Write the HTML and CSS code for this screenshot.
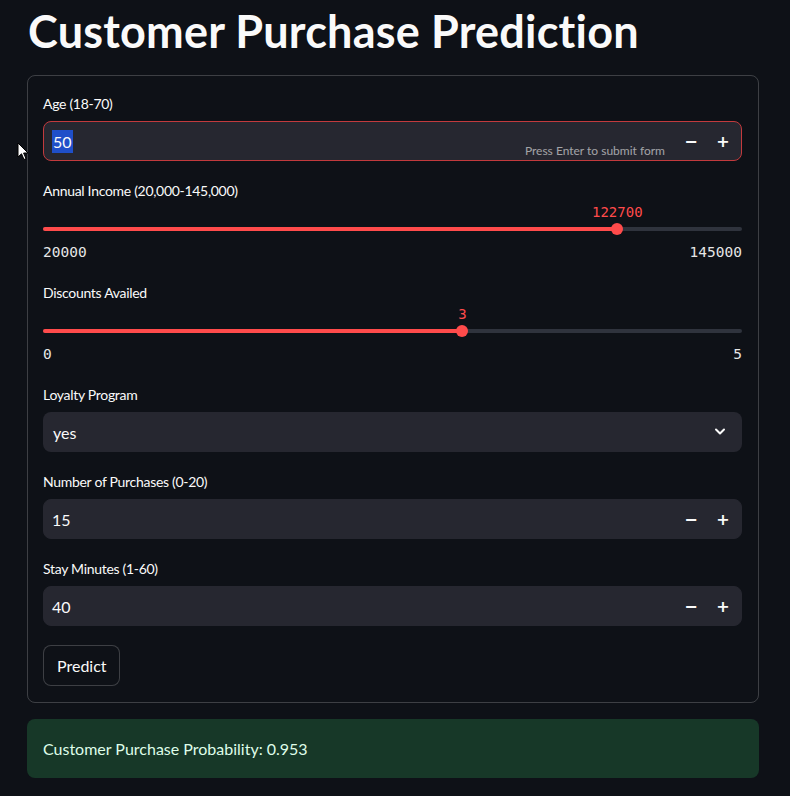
FILE: index.html
```html
<!DOCTYPE html>
<html>
<head>
<meta charset="utf-8">
<link rel="stylesheet" href="styles.css">
</head>
<body>
<div class="main">
  <h1 class="title">Customer Purchase Prediction</h1>
  <form class="form">
    <div class="widget num-widget">
      <div class="label">Age (18-70)</div>
      <div class="num-input focused">
        <span class="num-value"><span class="sel">50</span></span>
        <span class="hint">Press Enter to submit form</span>
        <span class="step">&#8722;</span>
        <span class="step">+</span>
      </div>
    </div>

    <div class="widget slider-widget">
      <div class="label">Annual Income (20,000-145,000)</div>
      <div class="slider-value-row">
        <span class="slider-value" style="left:82.16%">122700</span>
      </div>
      <div class="track-row">
        <div class="track">
          <div class="fill" style="width:82.16%"></div>
          <div class="thumb" style="left:82.16%"></div>
        </div>
      </div>
      <div class="ticks"><span>20000</span><span>145000</span></div>
    </div>

    <div class="widget slider-widget">
      <div class="label">Discounts Availed</div>
      <div class="slider-value-row">
        <span class="slider-value" style="left:60%">3</span>
      </div>
      <div class="track-row">
        <div class="track">
          <div class="fill" style="width:60%"></div>
          <div class="thumb" style="left:60%"></div>
        </div>
      </div>
      <div class="ticks"><span>0</span><span>5</span></div>
    </div>

    <div class="widget select-widget">
      <div class="label">Loyalty Program</div>
      <div class="select">
        <span>yes</span>
        <svg class="chev" width="12" height="8" viewBox="0 0 12 8"><path d="M2 1.5 L6 5.5 L10 1.5" fill="none" stroke="#fafafa" stroke-width="2" stroke-linecap="round" stroke-linejoin="round"/></svg>
      </div>
    </div>

    <div class="widget num-widget">
      <div class="label">Number of Purchases (0-20)</div>
      <div class="num-input">
        <span class="num-value">15</span>
        <span class="step">&#8722;</span>
        <span class="step">+</span>
      </div>
    </div>

    <div class="widget num-widget">
      <div class="label">Stay Minutes (1-60)</div>
      <div class="num-input">
        <span class="num-value">40</span>
        <span class="step">&#8722;</span>
        <span class="step">+</span>
      </div>
    </div>

    <div class="widget">
      <button type="button" class="btn">Predict</button>
    </div>
  </form>

  <div class="success">Customer Purchase Probability: 0.953</div>
</div>

<svg class="cursor" width="12" height="19" viewBox="0 0 12 19"><path d="M1 1 L1 15 L4.5 11.8 L7 17.5 L9 16.6 L6.6 11 L11 11 Z" fill="#ffffff" stroke="#000000" stroke-width="1" stroke-linejoin="round"/></svg>
</body>
</html>
```

FILE: styles.css
```css
* { box-sizing: border-box; }
html, body {
  margin: 0;
  padding: 0;
  background: #0e1117;
  color: #fafafa;
  font-family: "Lato", "Noto Sans", sans-serif;
}
.main {
  padding: 0 31px 0 27px;
}
.title {
  margin: 0;
  padding: 2px 0 0 1px;
  font-size: 45px;
  font-weight: 700;
  letter-spacing: 0.2px;
  line-height: 58px;
  height: 75px;
  color: #fafafa;
}
.form {
  border: 1px solid rgba(250,250,250,0.2);
  border-radius: 8px;
  padding: 17px 16px 16px 15px;
  display: flex;
  flex-direction: column;
  gap: 18px;
}
.label {
  font-size: 14px;
  letter-spacing: -0.3px;
  line-height: 21px;
  height: 21px;
  color: #fafafa;
}
.num-widget .label, .select-widget .label { margin-bottom: 7px; }
.num-widget, .select-widget { padding-bottom: 1px; }
.num-input {
  position: relative;
  height: 40px;
  background: #262730;
  border: 1px solid #262730;
  border-radius: 8px;
  display: flex;
  align-items: center;
  padding: 0 2px 0 8px;
}
.num-input.focused {
  border-color: #c23a3d;
}
.num-value {
  flex: 1;
  font-size: 16px;
  color: #fafafa;
}
.sel {
  background: #1f4fc9;
  padding: 2px 1px;
}
.hint {
  position: absolute;
  right: 76px;
  bottom: 2px;
  font-size: 12px;
  color: rgba(250,250,250,0.6);
}
.step {
  width: 32px;
  text-align: center;
  font-size: 16px;
  font-weight: 700;
  color: #fafafa;
  font-family: "DejaVu Sans", sans-serif;
}
.slider-widget { padding-bottom: 3px; }
.slider-value-row {
  position: relative;
  height: 18px;
  margin-top: 2px;
}
.slider-value {
  position: absolute;
  top: 0;
  transform: translateX(-50%);
  font-family: "DejaVu Sans Mono", monospace;
  font-size: 14px;
  line-height: 18px;
  color: #ff4b4b;
}
.track-row {
  height: 16px;
  display: flex;
  align-items: center;
}
.track {
  position: relative;
  width: 100%;
  height: 4px;
  border-radius: 2px;
  background: #2f333d;
}
.fill {
  height: 4px;
  border-radius: 2px;
  background: #ff4b4b;
}
.thumb {
  position: absolute;
  top: 50%;
  width: 12px;
  height: 12px;
  margin: -6px 0 0 -6px;
  border-radius: 50%;
  background: #ff4b4b;
}
.ticks {
  margin-top: 6px;
  display: flex;
  justify-content: space-between;
  font-family: "DejaVu Sans Mono", monospace;
  font-size: 14.5px;
  line-height: 18px;
  color: #e6e6e6;
}
.select {
  height: 40px;
  background: #262730;
  border-radius: 8px;
  display: flex;
  align-items: center;
  justify-content: space-between;
  padding: 0 16px 0 10px;
  font-size: 16px;
}
.btn {
  height: 41px;
  padding: 0 12px 0 13px;
  background: #0e1117;
  border: 1px solid rgba(250,250,250,0.2);
  border-radius: 8px;
  color: #fafafa;
  font-family: "Lato", "Noto Sans", sans-serif;
  font-size: 16px;
}
.success {
  margin-top: 16px;
  height: 59px;
  background: #173828;
  border-radius: 8px;
  padding: 0 16px;
  display: flex;
  align-items: center;
  font-size: 16px;
  color: #dffde9;
}
.cursor {
  position: absolute;
  left: 17px;
  top: 142px;
}
```
